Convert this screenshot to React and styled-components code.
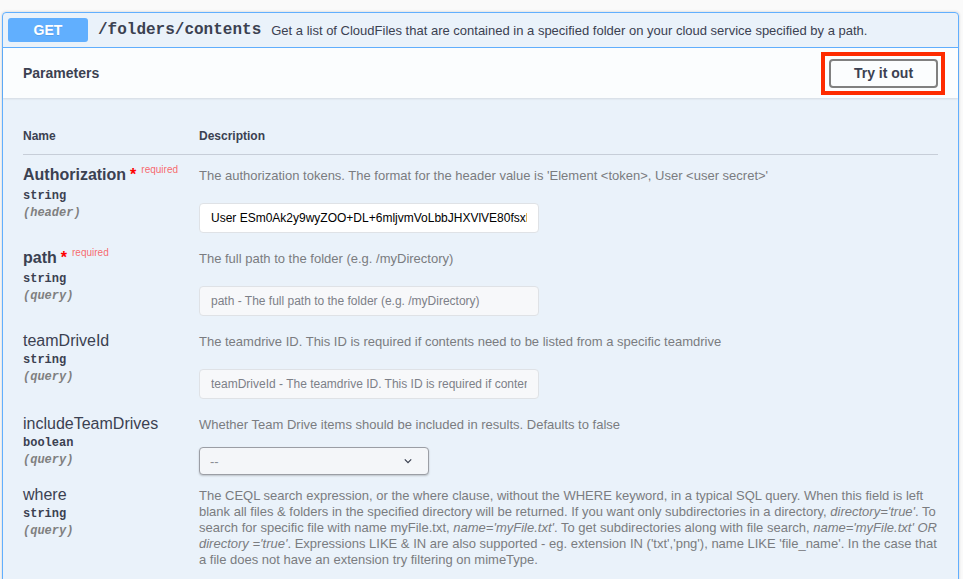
import React from "react";
import styled, { createGlobalStyle } from "styled-components";

const GlobalStyle = createGlobalStyle`
  html, body {
    margin: 0;
    padding: 0;
    background: #fafafa;
    font-family: "Liberation Sans", Arial, sans-serif;
    color: #3b4151;
  }
`;

const Page = styled.div`
  padding: 12px 4px 0 2px;
`;

const Opblock = styled.div`
  border: 1px solid #61affe;
  border-radius: 4px;
  background: rgba(97, 175, 254, 0.1);
  box-shadow: 0 0 3px rgba(0, 0, 0, 0.19);
  min-height: 600px;
`;

const Summary = styled.div`
  display: flex;
  align-items: center;
  padding: 5px;
  border-bottom: 1px solid #61affe;
`;

const Method = styled.span`
  min-width: 80px;
  padding: 6px 0;
  line-height: 12px;
  border-radius: 3px;
  background: #61affe;
  color: #fff;
  font-size: 14px;
  font-weight: 700;
  text-align: center;
  text-shadow: 0 1px 0 rgba(0, 0, 0, 0.1);
`;

const Path = styled.span`
  padding: 0 10px;
  font-family: "Liberation Mono", Courier, monospace;
  font-size: 16px;
  font-weight: 700;
  color: #3b4151;
`;

const SummaryText = styled.span`
  font-size: 13px;
  color: #3b4151;
`;

const SectionHeader = styled.div`
  display: flex;
  align-items: center;
  justify-content: space-between;
  min-height: 50px;
  box-sizing: border-box;
  padding: 8px 20px;
  background: rgba(255, 255, 255, 0.8);
  box-shadow: 0 1px 2px rgba(0, 0, 0, 0.1);
`;

const SectionTitle = styled.h4`
  margin: 0;
  font-size: 14px;
  font-weight: 700;
  color: #3b4151;
`;

const TryButton = styled.button`
  position: relative;
  width: 109px;
  height: 29px;
  border: 2px solid #808080;
  border-radius: 4px;
  background: transparent;
  font-family: "Liberation Sans", Arial, sans-serif;
  font-size: 14px;
  font-weight: 700;
  color: #3b4151;
  cursor: pointer;

  /* red highlight frame drawn over the screenshot */
  &::after {
    content: "";
    position: absolute;
    inset: -9px -9px -9px -10px;
    border: 4px solid #fe2b00;
    pointer-events: none;
  }
`;

const Body = styled.div`
  padding: 20px;
`;

const Row = styled.div`
  display: grid;
  grid-template-columns: 176px 1fr;
  padding: ${(p) => (p.$head ? "11px 0 10px" : "10px 0 0")};
  border-bottom: ${(p) => (p.$head ? "1px solid rgba(59, 65, 81, 0.2)" : "none")};
`;

const HeadCell = styled.div`
  font-size: 12px;
  line-height: 15px;
  font-weight: 700;
  color: #3b4151;
`;

const NameCol = styled.div`
  display: flex;
  flex-direction: column;
`;

const ParamName = styled.div`
  font-size: 16px;
  line-height: 20px;
  font-weight: ${(p) => (p.$required ? 700 : 400)};
  color: #3b4151;
`;

const Star = styled.span`
  margin-left: 4px;
  color: #f00;
  font-size: 16px;
`;

const RequiredTag = styled.span`
  position: relative;
  top: -7px;
  padding-left: 5px;
  font-size: 10px;
  font-weight: 400;
  color: rgba(255, 0, 0, 0.6);
`;

const ParamType = styled.div`
  padding: 2px 0;
  font-family: "Liberation Mono", Courier, monospace;
  font-size: 12px;
  line-height: 15px;
  font-weight: 700;
  color: #3b4151;
`;

const ParamIn = styled.div`
  font-family: "Liberation Mono", Courier, monospace;
  font-size: 12px;
  line-height: 15px;
  font-weight: 700;
  font-style: italic;
  color: #808080;
`;

const DescCol = styled.div`
  display: flex;
  flex-direction: column;
  align-items: flex-start;
`;

const Desc = styled.p`
  margin: 3px 0 0;
  font-size: 13px;
  line-height: 16px;
  color: #7a7c80;
`;

const TextInput = styled.input`
  box-sizing: border-box;
  width: 340px;
  height: 30px;
  margin: 19px 0 5px;
  padding: 0 11px;
  border: 1px solid #dfe2e6;
  border-radius: 4px;
  background: ${(p) => (p.$empty ? "#f7f8fa" : "#fff")};
  font-family: "Liberation Sans", Arial, sans-serif;
  font-size: 12px;
  color: #000;
  &::placeholder {
    color: #7d8088;
  }
`;

const Select = styled.select`
  box-sizing: border-box;
  width: 230px;
  height: 28px;
  margin-top: 14px;
  padding: 0 10px;
  border: 1px solid #9b9ea5;
  border-radius: 4px;
  background: #f4f6f9
    url("data:image/svg+xml;charset=utf-8,%3Csvg xmlns='http://www.w3.org/2000/svg' viewBox='0 0 20 20'%3E%3Cpath fill='none' stroke='%233b4151' stroke-width='1.6' d='M6 8l4 4 4-4'/%3E%3C/svg%3E")
    right 12px center / 16px no-repeat;
  box-shadow: 0 1px 2px rgba(0, 0, 0, 0.2);
  appearance: none;
  font-family: "Liberation Sans", Arial, sans-serif;
  font-size: 13px;
  color: #8a8d94;
`;

const params = [
  {
    name: "Authorization",
    required: true,
    type: "string",
    in: "header",
    desc: "The authorization tokens. The format for the header value is 'Element <token>, User <user secret>'",
    value: "User ESm0Ak2y9wyZOO+DL+6mljvmVoLbbJHXVlVE80fsxFq9pXk=, Element 7c1d3b9a",
  },
  {
    name: "path",
    required: true,
    type: "string",
    in: "query",
    desc: "The full path to the folder (e.g. /myDirectory)",
    placeholder: "path - The full path to the folder (e.g. /myDirectory)",
  },
  {
    name: "teamDriveId",
    type: "string",
    in: "query",
    desc: "The teamdrive ID. This ID is required if contents need to be listed from a specific teamdrive",
    placeholder:
      "teamDriveId - The teamdrive ID. This ID is required if contents need to be listed from a specific teamdrive",
  },
  {
    name: "includeTeamDrives",
    type: "boolean",
    in: "query",
    desc: "Whether Team Drive items should be included in results. Defaults to false",
    select: true,
  },
];

const WhereDesc = () => (
  <Desc>
    The CEQL search expression, or the where clause, without the WHERE keyword, in a typical SQL
    query. When this field is left blank all files &amp; folders in the specified directory will be
    returned. If you want only subdirectories in a directory, <em>directory='true'</em>. To search
    for specific file with name myFile.txt, <em>name='myFile.txt'</em>. To get subdirectories along
    with file search, <em>name='myFile.txt' OR directory ='true'</em>. Expressions LIKE &amp; IN
    are also supported - eg. extension IN ('txt','png'), name LIKE 'file_name'. In the case that a
    file does not have an extension try filtering on mimeType.
  </Desc>
);

const NameCell = ({ p }) => (
  <NameCol>
    <ParamName $required={p.required}>
      {p.name}
      {p.required && (
        <>
          <Star>*</Star>
          <RequiredTag>required</RequiredTag>
        </>
      )}
    </ParamName>
    <ParamType>{p.type}</ParamType>
    <ParamIn>({p.in})</ParamIn>
  </NameCol>
);

const App = () => {
  return (
    <>
      <GlobalStyle />
      <Page>
        <Opblock>
          <Summary>
            <Method>GET</Method>
            <Path>/folders/contents</Path>
            <SummaryText>
              Get a list of CloudFiles that are contained in a specified folder on your cloud
              service specified by a path.
            </SummaryText>
          </Summary>
          <SectionHeader>
            <SectionTitle>Parameters</SectionTitle>
            <TryButton>Try it out</TryButton>
          </SectionHeader>
          <Body>
            <Row $head>
              <HeadCell>Name</HeadCell>
              <HeadCell>Description</HeadCell>
            </Row>
            {params.map((p) => (
              <Row key={p.name}>
                <NameCell p={p} />
                <DescCol>
                  <Desc>{p.desc}</Desc>
                  {p.select ? (
                    <Select defaultValue="">
                      <option value="">--</option>
                      <option value="true">true</option>
                      <option value="false">false</option>
                    </Select>
                  ) : (
                    <TextInput
                      $empty={!p.value}
                      defaultValue={p.value}
                      placeholder={p.placeholder}
                    />
                  )}
                </DescCol>
              </Row>
            ))}
            <Row>
              <NameCell p={{ name: "where", type: "string", in: "query" }} />
              <DescCol>
                <WhereDesc />
              </DescCol>
            </Row>
          </Body>
        </Opblock>
      </Page>
    </>
  );
};

export default App;
